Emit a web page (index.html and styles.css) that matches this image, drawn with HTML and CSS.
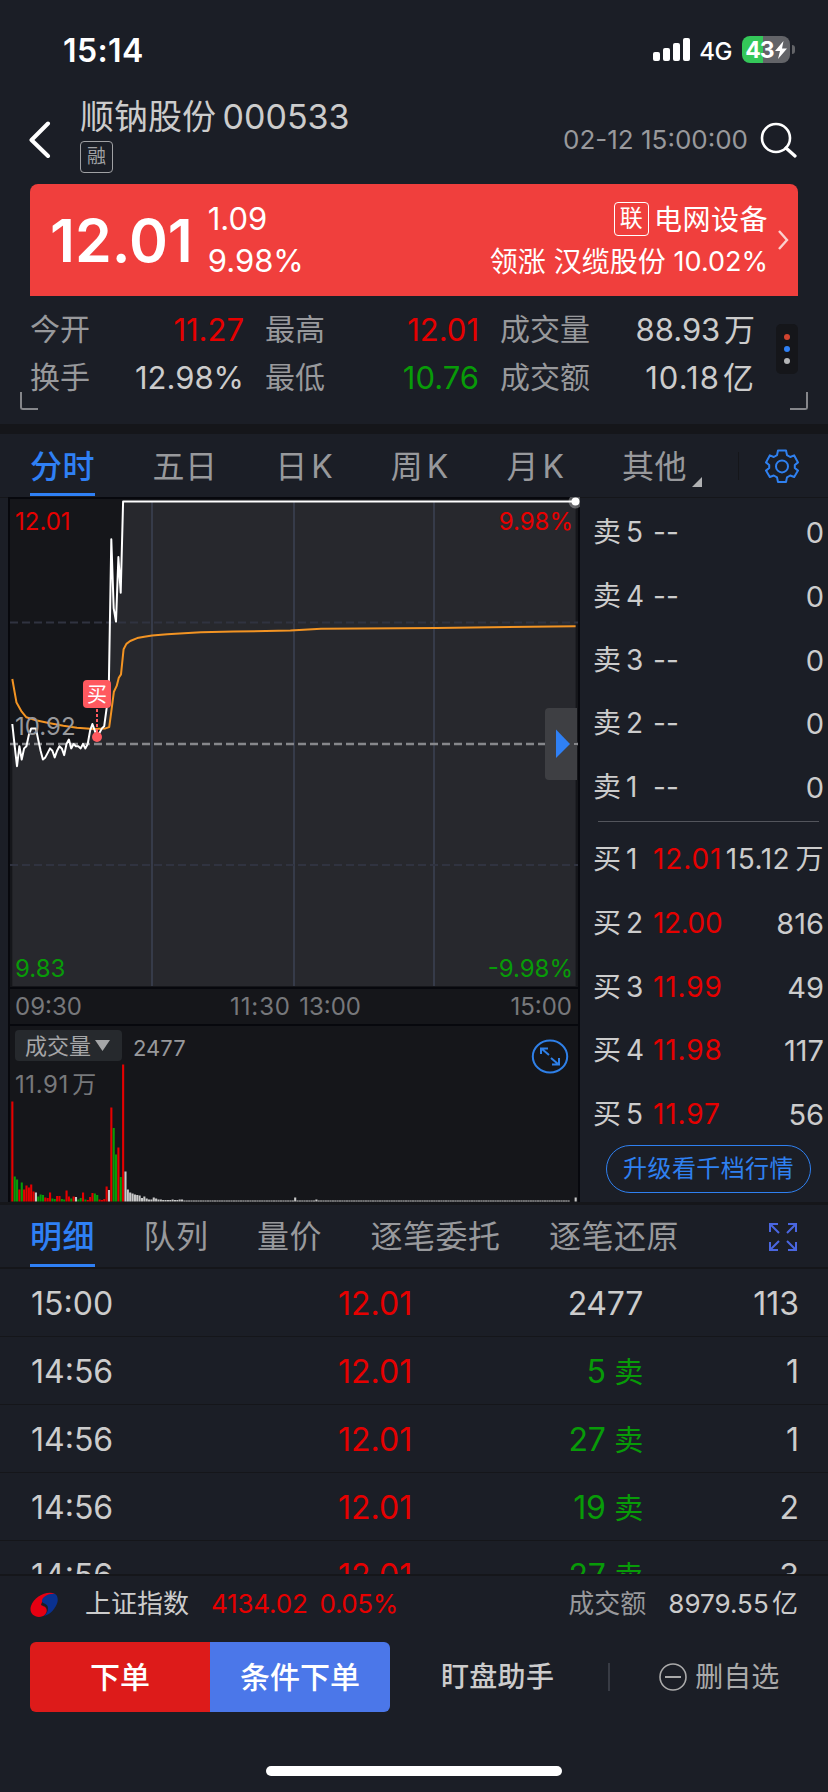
FILE: index.html
```html
<!DOCTYPE html>
<html lang="zh-CN">
<head>
  <meta charset="UTF-8">
  <title>顺钠股份 000533</title>
  <link rel="stylesheet" href="styles.css">
</head>
<body>
  <div class="statusbar">
    <span class="clock">15:14</span>
    <svg class="signal" width="38" height="24" viewBox="0 0 38 24" fill="#fff">
      <rect x="0" y="14" width="7" height="9" rx="2"/>
      <rect x="10" y="10" width="7" height="13" rx="2"/>
      <rect x="20" y="5" width="7" height="18" rx="2"/>
      <rect x="30" y="0" width="7" height="23" rx="2"/>
    </svg>
    <span class="network">4G</span>
    <span class="battery">43<svg width="12" height="18" viewBox="0 0 12 18"><path d="M8.5 0 0 10h5L3 18 12 7.5H7z" fill="#fff"/></svg></span>
    <span class="battery-cap"></span>
  </div>

  <header>
    <svg class="back" width="22" height="38" viewBox="0 0 22 38"><path d="M19 2.5 2.5 19 19 35" fill="none" stroke="#fff" stroke-width="4" stroke-linecap="round" stroke-linejoin="round"/></svg>
    <div class="title">
      <h1>顺钠股份 000533</h1>
      <span class="tag">融</span>
    </div>
    <span class="time">02-12 15:00:00</span>
    <svg class="search" width="38" height="36" viewBox="0 0 38 36" fill="none" stroke="#fff" stroke-width="2.6"><circle cx="16" cy="16" r="14"/><path d="M26 26l9 8" stroke-width="3.2" stroke-linecap="round"/></svg>
  </header>

  <section class="price-card">
    <strong>12.01</strong>
    <div class="change"><span>1.09</span><span>9.98%</span></div>
    <div class="sector">
      <div class="sector-name"><span class="link-tag">联</span>电网设备</div>
      <div>领涨 汉缆股份 <span class="rate">10.02%</span></div>
    </div>
    <svg width="12" height="22" viewBox="0 0 12 22"><path d="M2 2l8 9-8 9" fill="none" stroke="#fbd0cf" stroke-width="2.4"/></svg>
  </section>

  <section class="stats">
    <div class="stat"><label>今开</label><b class="red">11.27</b></div>
    <div class="stat"><label>最高</label><b class="red">12.01</b></div>
    <div class="stat"><label>成交量</label><b>88.93 万</b></div>
    <div class="stat"><label>换手</label><b>12.98%</b></div>
    <div class="stat"><label>最低</label><b class="green">10.76</b></div>
    <div class="stat"><label>成交额</label><b class="loose">10.18 亿</b></div>
    <div class="more"><i></i><i></i><i></i></div>
    <span class="corner left"></span>
    <span class="corner right"></span>
  </section>

  <nav class="tabs">
    <a class="active">分时</a>
    <a>五日</a>
    <a>日 K</a>
    <a>周 K</a>
    <a>月 K</a>
    <a class="other">其他</a>
    <span class="sep"></span>
    <svg class="gear" width="34" height="34" viewBox="0 0 34 34" fill="none" stroke="#2f80f0" stroke-width="2" stroke-linejoin="round">
      <path d="M13 1.5h8l1 4.6 3.2 1.9 4-1.6 3.8 7-3.2 2.6v3l3.2 2.6-3.8 6.4-4-1.5-3.2 1.9-1 4.6h-8l-1-4.6-3.2-1.9-4 1.5L1 21.600l3.200-2.600v-3L1 13.400l3.800-7 4 1.600L12 6.100z"/>
      <circle cx="17" cy="17.400" r="6"/>
    </svg>
  </nav>

  <main>
    <svg class="chart" width="572" height="705" viewBox="8 497 572 705">
      <rect x="9" y="498" width="570" height="710" fill="#15161a" stroke="#07080d" stroke-width="2"/>
      <path id="area" fill="#27282d"/>
      <path d="M152 502V986M294 502V986M434 502V986" stroke="#363b49" stroke-width="2"/>
      <path d="M10 622.500H578M10 865H578" stroke="#303340" stroke-width="2" stroke-dasharray="8 4"/>
      <path d="M10 744H578" stroke="#86878b" stroke-width="2.400" stroke-dasharray="8 4"/>
      <path d="M9 988H579M9 1025H579" stroke="#07080d" stroke-width="2"/>

      <path id="average" fill="none" stroke="#f39423" stroke-width="2" stroke-linejoin="round"/>
      <path id="price" fill="none" stroke="#fff" stroke-width="2" stroke-linejoin="round"/>
      <circle cx="575.500" cy="501.500" r="7" fill="#fff" fill-opacity=".3"/>
      <circle cx="575.500" cy="501.500" r="4" fill="#fff"/>

      <g class="axis">
        <text x="15" y="530" class="red">12.01</text>
        <text x="573" y="530" class="red" text-anchor="end">9.98%</text>
        <text x="15" y="735" class="mid">10.92</text>
        <text x="15" y="977" class="green">9.83</text>
        <text x="573" y="977" class="green" text-anchor="end">-9.98%</text>
        <text x="15" y="1015">09:30</text>
        <text x="230" y="1015" class="loose">11:30</text>
        <text x="361" y="1015" text-anchor="end">13:00</text>
        <text x="572" y="1015" text-anchor="end">15:00</text>
      </g>

      <!-- buy marker -->
      <path d="M97 709V733" stroke="#ff595f" stroke-width="2" stroke-dasharray="3 2"/>
      <circle cx="97" cy="737" r="5" fill="#ff595f"/>
      <rect x="83" y="680" width="28" height="28" rx="4" fill="#ff595f"/>
      <text x="97" y="702" class="buy" text-anchor="middle">买</text>

      <!-- drawer handle -->
      <path d="M577 708H549a4 4 0 0 0-4 4V776a4 4 0 0 0 4 4H577z" fill="#3e3f43"/>
      <path d="M556 729.500V758L570 744z" fill="#2f80f5"/>
      <path d="M574 744H578" stroke="#86878b" stroke-width="2"/>

      <!-- volume -->
      <rect x="15" y="1030" width="107" height="31" rx="4" fill="#26292d"/>
      <text x="25" y="1054" class="vol-name">成交量</text>
      <path d="M95 1040H110L102.500 1051z" fill="#a5a6a8"/>
      <text x="133" y="1056" class="vol-now">2477</text>
      <text x="15" y="1093" class="vol-max">11.91 万</text>
      <g id="volume"></g>
      <g fill="none" stroke="#2f80e8" stroke-width="2">
        <ellipse cx="550" cy="1056.500" rx="17.200" ry="16"/>
        <path d="M541 1054V1048.500H548M542 1049l7 6M559 1058V1064.500H552M558 1064l-7-6"/>
      </g>
    </svg>

    <aside class="book">
      <div class="level"><span>卖 5</span><span>--</span><span>0</span></div>
      <div class="level"><span>卖 4</span><span>--</span><span>0</span></div>
      <div class="level"><span>卖 3</span><span>--</span><span>0</span></div>
      <div class="level"><span>卖 2</span><span>--</span><span>0</span></div>
      <div class="level"><span>卖 1</span><span>--</span><span>0</span></div>
      <hr>
      <div class="level"><span>买 1</span><span class="red">12.01</span><span class="wide">15.12 万</span></div>
      <div class="level"><span>买 2</span><span class="red tight">12.00</span><span>816</span></div>
      <div class="level"><span>买 3</span><span class="red">11.99</span><span>49</span></div>
      <div class="level"><span>买 4</span><span class="red">11.98</span><span>117</span></div>
      <div class="level"><span>买 5</span><span class="red">11.97</span><span>56</span></div>
      <button class="upgrade">升级看千档行情</button>
    </aside>
  </main>

  <nav class="tabs detail-tabs">
    <a class="active">明细</a>
    <a>队列</a>
    <a>量价</a>
    <a>逐笔委托</a>
    <a>逐笔还原</a>
    <svg class="expand" width="28" height="28" viewBox="0 0 28 28" fill="none" stroke="#4a66e0" stroke-width="2">
      <path d="M1 9V1H9M1 1l9 9M19 1H27V9M27 1l-9 9M1 19V27H9M1 27l9-9M27 19V27H19M27 27l-9-9"/>
    </svg>
  </nav>

  <section class="trades">
    <div class="trade"><span>15:00</span><span class="red">12.01</span><span>2477</span><span>113</span></div>
    <div class="trade"><span>14:56</span><span class="red">12.01</span><span class="green">5 <small>卖</small></span><span>1</span></div>
    <div class="trade"><span>14:56</span><span class="red">12.01</span><span class="green">27 <small>卖</small></span><span>1</span></div>
    <div class="trade"><span>14:56</span><span class="red">12.01</span><span class="green">19 <small>卖</small></span><span>2</span></div>
    <div class="trade"><span>14:56</span><span class="red">12.01</span><span class="green">27 <small>卖</small></span><span>3</span></div>
  </section>

  <footer>
    <div class="index">
      <svg width="28" height="25" viewBox="0 0 28 25">
        <path d="M25 2C17-2 4 5 1 14c-2 6 2 11 8 11 7 0 9-6 7-9-1-2-4-2-5-3 1-6 8-9 14-11z" fill="#e60012"/>
        <path d="M25 2c-6-1-13 3-13 7 0 3 6 2 6 7 0 4-2 6-4 8 6-1 12-8 13.500-14 .8-4-.5-7-2.500-8z" fill="#0a318f"/>
      </svg>
      <span class="index-name">上证指数</span>
      <span class="index-price">4134.02</span>
      <span class="index-rate">0.05%</span>
      <span class="index-label">成交额</span>
      <span class="index-amount">8979.55 亿</span>
    </div>
    <div class="actions">
      <button class="order">下单</button>
      <button class="cond">条件下单</button>
      <span class="watch">盯盘助手</span>
      <span class="line"></span>
      <span class="remove"><svg width="28" height="28" viewBox="0 0 28 28" fill="none" stroke="#aaa" stroke-width="1.600"><circle cx="14" cy="14" r="13"/><path d="M6 14H22" stroke-width="2"/></svg>删自选</span>
    </div>
    <div class="home"></div>
  </footer>

  <script src="chart.js"></script>
</body>
</html>
```
FILE: chart.js
```js
const LEFT = 12.3;
const STEP = 2.357;
const MID = 744;
const BOTTOM = 986;
const MINUTES = 240;

const prices = [
  11.01, 10.91, 10.82, 10.91, 10.85, 10.90, 10.91, 10.96, 10.99, 10.99, 10.99, 10.94,
  10.89, 10.85, 10.86, 10.88, 10.90, 10.89, 10.86, 10.89, 10.91, 10.90, 10.87, 10.92,
  10.94, 10.90, 10.92, 10.91, 10.91, 10.90, 10.92, 10.90, 10.92, 10.98, 11.01, 10.98,
  10.95, 10.97, 10.99, 11.00, 11.08, 11.20, 11.84, 11.53, 11.47, 11.76, 11.60
];
while (prices.length < MINUTES) prices.push(12.01);

// [minute, average price]
const averages = [
  [0, 11.212], [1.8, 11.106], [4, 11.065], [6, 11.04], [10.4, 11.025], [16, 11.013],
  [21.7, 11.002], [27.4, 10.993], [34.5, 10.987], [39.5, 10.99], [41.1, 10.996],
  [42, 11.065], [43.1, 11.155], [44.3, 11.181], [45.2, 11.218], [46.1, 11.233],
  [47.2, 11.346], [48.4, 11.37], [50, 11.383], [53, 11.396], [56, 11.402], [59.3, 11.407],
  [65.7, 11.413], [80, 11.422], [94, 11.425], [118, 11.43], [131, 11.438], [180, 11.442], [239, 11.449]
];

// volume bars: height + colour
const volumes = ('100r 25g 22g 12r 19g 12r 16r 14r 17r 10r 9w 5g 7g 6.500g 4r 3.500r 9r 3g 2.500g 5.500r 5.500r 2.500g 2g ' +
  '11r 5r 3g 5r 4.500w 2g 3.500g 9r 2g 1.500r 4.500r 8.500r 8g 6.500g 2r 1.500r 2.500r 15r 11.500w 94r 73.500g 47g 54r ' +
  '24.500g 137r 30w 12w 9w 8w 7w 6.500w 6w 3.500w 5w 3w 2w 2w 4w 3w 2w 2w 1.500w 1.500w 1.500w 1.500w 2w 1.500w 1.500w 2w 2w').split(' ');
while (volumes.length < MINUTES - 3) volumes.push('1w');
volumes[120] = '4w';
volumes[129] = '2w';
volumes.push('0w', '0w', '4w');

const colors = { r: '#e60000', g: '#089b08', w: '#c8c8c8' };

const px = i => (LEFT + i * STEP).toFixed(1);
const py = p => (MID - (p - 10.92) * 222.5).toFixed(1);

const line = prices.map((p, i) => px(i) + ' ' + py(p)).join('L');
document.getElementById('price').setAttribute('d', 'M' + line);
document.getElementById('area').setAttribute('d',
  'M' + px(0) + ' ' + BOTTOM + 'L' + line + 'V' + BOTTOM + 'z');
document.getElementById('average').setAttribute('d',
  'M' + averages.map(a => px(a[0]) + ' ' + py(a[1])).join('L'));

let bars = '';
volumes.forEach((v, i) => {
  const h = parseFloat(v);
  bars += `<rect x="${LEFT + i * STEP - 1}" y="${1201.5 - h}" width="2.1" height="${h}" fill="${colors[v.slice(-1)]}"/>`;
});
document.getElementById('volume').innerHTML = bars;
```
FILE: styles.css
```css
* {
  box-sizing: border-box;
}

body {
  margin: 0;
  width: 828px;
  height: 1792px;
  overflow: hidden;
  display: flex;
  flex-direction: column;
  background: #1b1e26;
  color: #ccc;
  font-family: Inter, "Noto Sans CJK SC", sans-serif;
}

button {
  font-family: inherit;
  border: none;
  padding: 0;
}

svg {
  flex: none;
}

.red {
  color: #e60000;
  fill: #e60000;
}

.green {
  color: #089b08;
  fill: #089b08;
}

/* status bar */
.statusbar {
  height: 99px;
  padding: 0 33px 0 63px;
  display: flex;
  align-items: center;
  color: #fff;
}

.clock {
  font-size: 32px;
  font-weight: 600;
  letter-spacing: 0.4px;
  margin: 2px auto 0 0;
}

.network {
  font-size: 24px;
  font-weight: 500;
  margin: 3px 10px 0 8px;
  letter-spacing: -0.5px;
}

.battery {
  width: 48px;
  height: 27px;
  border-radius: 8px;
  background: linear-gradient(90deg, #34c759 44%, #636468 44%);
  font-size: 23px;
  font-weight: 700;
  letter-spacing: -1px;
  display: flex;
  align-items: center;
  justify-content: center;
}

.battery svg {
  margin-left: 1px;
}

.battery-cap {
  width: 3px;
  height: 9px;
  margin-left: 2px;
  border-radius: 0 4px 4px 0;
  background: #636468;
}

/* header */
header {
  height: 85px;
  padding: 0 30px 0 29px;
  display: flex;
}

.back {
  margin-top: 22px;
}

.title {
  margin-left: 29px;
}

h1 {
  margin: 0;
  font-size: 34px;
  line-height: 35px;
  font-weight: 400;
  word-spacing: -3px;
}

.tag {
  display: block;
  width: 33px;
  height: 32px;
  margin-top: 7px;
  border: 1px solid #a0a1a4;
  border-radius: 4px;
  color: #a0a1a4;
  font-size: 19px;
  line-height: 30px;
  text-align: center;
}

.time {
  margin: 25px 12px 0 auto;
  font-size: 26px;
  line-height: 32px;
  color: #98999c;
}

.search {
  margin-top: 23px;
}

/* price card */
.price-card {
  margin: 0 30px;
  height: 112px;
  padding: 0 9px 0 20px;
  border-radius: 8px 8px 0 0;
  background: #f03f3d;
  color: #fff;
  display: flex;
  align-items: center;
}

.price-card strong {
  font-size: 59px;
  font-weight: 600;
  line-height: 64px;
  margin-top: 2px;
}

.change {
  margin-left: 15px;
  display: flex;
  flex-direction: column;
  font-size: 31px;
  line-height: 42px;
}

.sector {
  margin: 2px 9px 0 auto;
  font-size: 28px;
  line-height: 42px;
  text-align: right;
}

.sector div {
  display: flex;
  align-items: center;
  justify-content: flex-end;
  white-space: pre;
}

.sector .sector-name {
  letter-spacing: 0.5px;
}

.rate {
  font-size: 27px;
}

.link-tag {
  width: 35px;
  height: 34px;
  margin: -2px 5px 0 0;
  border: 1px solid #fff;
  border-radius: 4px;
  font-size: 23px;
  line-height: 31px;
  text-align: center;
}

/* stats */
.stats {
  position: relative;
  height: 128px;
  padding: 9px 30px 0;
  display: grid;
  grid-template-columns: 214px 214px 255px 22px;
  grid-template-rows: 48px 48px;
  column-gap: 21px;
}

.stat {
  display: flex;
  justify-content: space-between;
  align-items: center;
  line-height: 47px;
}

.stat label {
  font-size: 30px;
  color: #98999c;
}

.stat b {
  font-size: 31px;
  font-weight: 400;
  word-spacing: -5px;
}

.stat .loose {
  letter-spacing: 1.1px;
  word-spacing: -7px;
}

.more {
  grid-column: 4;
  grid-row: 1 / 3;
  align-self: center;
  width: 22px;
  height: 50px;
  margin-top: -8px;
  border-radius: 5px;
  background: #15161a;
  display: flex;
  flex-direction: column;
  align-items: center;
  justify-content: center;
  gap: 6px;
}

.more i {
  width: 6px;
  height: 6px;
  border-radius: 50%;
  background: #d0432f;
}

.more i:nth-child(2) {
  background: #2f80f5;
}

.more i:nth-child(3) {
  background: #b4b5b7;
}

.corner {
  position: absolute;
  bottom: 14px;
  width: 18px;
  height: 18px;
  border-bottom: 2px solid #85868a;
}

.corner.left {
  left: 20px;
  border-left: 2px solid #85868a;
  border-bottom-left-radius: 3px;
}

.corner.right {
  right: 20px;
  border-right: 2px solid #85868a;
  border-bottom-right-radius: 3px;
}

/* tabs */
.tabs {
  height: 73px;
  padding: 0 30px;
  border-top: 10px solid #15161a;
  display: flex;
  gap: 57.6px;
  letter-spacing: 0.5px;
}

.tabs a {
  font-size: 32px;
  line-height: 66px;
  height: 62px;
  color: #98999c;
  word-spacing: -6px;
  white-space: nowrap;
}

.tabs a.active {
  color: #2f80f5;
  font-weight: 500;
  border-bottom: 3px solid #2f80f5;
}

.other {
  position: relative;
}

.other::after {
  content: "";
  position: absolute;
  right: -15px;
  bottom: 9px;
  border-left: 10px solid transparent;
  border-bottom: 10px solid #b0b1b3;
}

.sep {
  width: 1px;
  height: 28px;
  margin: 18px -40px 0 -7px;
  background: #15161a;
}

.gear {
  margin: 15px -1px 0 auto;
}

/* chart and order book */
main {
  height: 705px;
  display: flex;
  border-top: 1px solid #15161a;
}

.chart {
  margin-left: 8px;
  margin-top: -1px;
}

.chart text {
  font-size: 24px;
}

.axis {
  fill: #77787b;
}

.axis .loose {
  letter-spacing: 0.9px;
}

.axis .mid {
  fill: #98999c;
}

.chart .buy {
  font-size: 20px;
  fill: #fff;
}

.chart .vol-name {
  font-size: 22px;
  fill: #a5a6a8;
}

.chart .vol-now {
  font-size: 22px;
  fill: #98999c;
}

.chart .vol-max {
  font-size: 24px;
  fill: #77787b;
  letter-spacing: 0.6px;
  word-spacing: -4px;
}

.book {
  width: 248px;
  padding: 2px 4px 0 13px;
}

.level {
  display: grid;
  grid-template-columns: 60px 70px 1fr;
  height: 63.8px;
  line-height: 65px;
  font-size: 29px;
  white-space: nowrap;
  word-spacing: -3px;
}

.level span:first-child {
  font-size: 28px;
}

.level span:last-child {
  text-align: right;
  justify-self: end;
}

.level span:nth-child(2) {
  font-size: 28px;
}

.level .red {
  letter-spacing: 0.9px;
}

.level .tight {
  letter-spacing: -0.4px;
}

.level .wide {
  font-size: 28px;
  letter-spacing: 0.5px;
}

.book hr {
  margin: 2px 5px 5px 5px;
  border: none;
  height: 1px;
  background: #53555c;
}

.upgrade {
  display: block;
  width: 205px;
  height: 48px;
  margin: -1px 0 0 13px;
  border: 1px solid #2f80f0;
  border-radius: 24px;
  background: none;
  color: #2f80f0;
  font-size: 24px;
  line-height: 46px;
  letter-spacing: 0.4px;
}

/* trade details */
.detail-tabs {
  height: 67px;
  border-top: 3px solid #15161a;
  border-bottom: 2px solid #15161a;
  gap: 48.5px;
}

.detail-tabs a {
  line-height: 64px;
}

.expand {
  margin: 18px 1px 0 auto;
}

.trades {
  height: 305px;
  overflow: hidden;
}

.trade {
  height: 68px;
  padding: 0 29px 0 31px;
  border-bottom: 1px solid #15161a;
  display: grid;
  grid-template-columns: 307px 120px 185px 156px;
  font-size: 32px;
  line-height: 70px;
}

.trade span:nth-child(n + 3) {
  text-align: right;
}

.trade span:nth-child(3) {
  letter-spacing: -0.3px;
}

.trade small {
  font-size: 29px;
  line-height: 1;
}

/* footer */
footer {
  flex: 1;
  border-top: 2px solid #15161a;
  padding: 0 30px;
}

.index {
  height: 66px;
  padding-bottom: 10px;
  display: flex;
  align-items: center;
  font-size: 26px;
  line-height: 32px;
}

.index-name {
  margin-left: 27px;
}

.index-price {
  margin-left: 22px;
  color: #e60000;
  letter-spacing: -0.2px;
}

.index-rate {
  margin-left: 12px;
  color: #e60000;
  letter-spacing: -0.4px;
}

.index-label {
  margin-left: auto;
  color: #98999c;
}

.index-amount {
  margin-left: 22px;
  word-spacing: -4px;
}

.actions {
  display: flex;
  align-items: center;
  height: 70px;
}

.actions button {
  width: 180px;
  height: 70px;
  color: #fff;
  font-size: 30px;
  line-height: 70px;
  font-weight: 500;
}

.order {
  background: #dd1b1a;
  border-radius: 6px 0 0 6px;
}

.cond {
  background: #4b77e9;
  border-radius: 0 6px 6px 0;
}

.watch {
  margin-left: 51px;
  font-size: 28px;
  font-weight: 500;
  line-height: 70px;
  letter-spacing: 0.3px;
}

.line {
  width: 2px;
  height: 28px;
  margin-left: 54px;
  background: #383b44;
}

.remove {
  margin-left: 49px;
  display: flex;
  align-items: center;
  gap: 8px;
  font-size: 28px;
  line-height: 70px;
  color: #aaa;
}

.home {
  width: 296px;
  height: 10px;
  margin: 54px auto 0;
  border-radius: 5px;
  background: #fff;
}
```
